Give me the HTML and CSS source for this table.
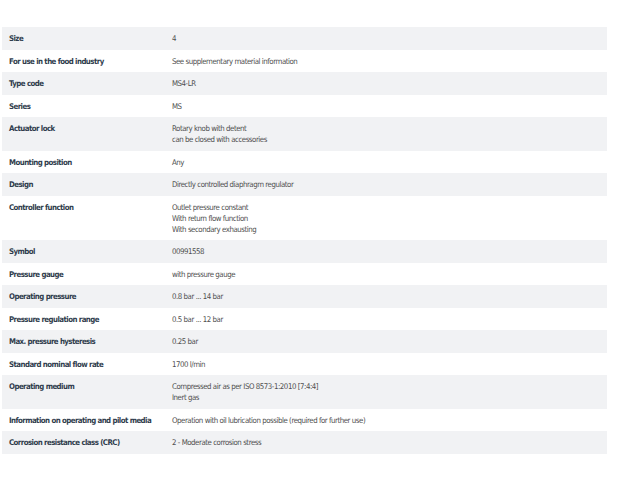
FILE: index.html
```html
<!DOCTYPE html>
<html lang="en">
<head>
    <meta charset="UTF-8">
    <title>Technical data</title>
    <link rel="stylesheet" href="styles.css">
</head>
<body>
    <table class="spec-table">
        <tr><th>Size</th><td>4</td></tr>
        <tr><th>For use in the food industry</th><td>See supplementary material information</td></tr>
        <tr><th>Type code</th><td>MS4-LR</td></tr>
        <tr><th>Series</th><td>MS</td></tr>
        <tr><th>Actuator lock</th><td>Rotary knob with detent<br>can be closed with accessories</td></tr>
        <tr><th>Mounting position</th><td>Any</td></tr>
        <tr><th>Design</th><td>Directly controlled diaphragm regulator</td></tr>
        <tr><th>Controller function</th><td>Outlet pressure constant<br>With return flow function<br>With secondary exhausting</td></tr>
        <tr><th>Symbol</th><td>00991558</td></tr>
        <tr><th>Pressure gauge</th><td>with pressure gauge</td></tr>
        <tr><th>Operating pressure</th><td>0.8 bar ... 14 bar</td></tr>
        <tr><th>Pressure regulation range</th><td>0.5 bar ... 12 bar</td></tr>
        <tr><th>Max. pressure hysteresis</th><td>0.25 bar</td></tr>
        <tr><th>Standard nominal flow rate</th><td>1700 l/min</td></tr>
        <tr><th>Operating medium</th><td>Compressed air as per ISO 8573-1:2010 [7:4:4]<br>Inert gas</td></tr>
        <tr><th>Information on operating and pilot media</th><td>Operation with oil lubrication possible (required for further use)</td></tr>
        <tr><th>Corrosion resistance class (CRC)</th><td>2 - Moderate corrosion stress</td></tr>
    </table>
</body>
</html>
```

FILE: styles.css
```css
body {
    margin: 0;
    padding: 27px 33px 0 2px;
    background: #fff;
    font-family: "DejaVu Sans Condensed", "Liberation Sans", sans-serif;
    font-size: 7.8px;
}

.spec-table {
    width: 605px;
    border-collapse: collapse;
}

.spec-table tr:nth-child(odd) {
    background-color: #f1f2f4;
}

.spec-table th,
.spec-table td {
    text-align: left;
    vertical-align: top;
    padding: 6px 7px 5.5px;
    line-height: 11px;
}

.spec-table th {
    width: 149px;
    white-space: nowrap;
    color: #2f3c4c;
    font-weight: bold;
    letter-spacing: -0.55px;
}

.spec-table td {
    color: #4f4f4f;
    letter-spacing: -0.45px;
}
```
